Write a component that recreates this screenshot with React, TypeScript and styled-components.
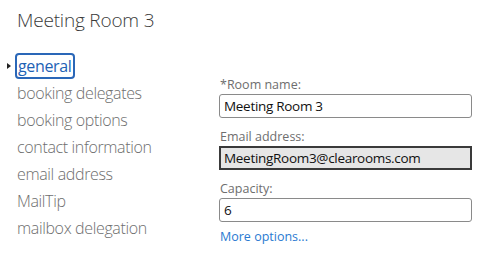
import React from "react";
import styled, { createGlobalStyle } from "styled-components";

const Global = createGlobalStyle`
  html, body { margin: 0; padding: 0; background: #fff; }
  body { font-family: "Open Sans", "Noto Sans", sans-serif; }
`;

const Page = styled.div`
  width: 500px;
  height: 267px;
  overflow: hidden;
  padding: 6px 0 0 17px;
  box-sizing: border-box;
`;

const Title = styled.h1`
  margin: 0;
  font-size: 19px;
  font-weight: 300;
  color: #3a3a3a;
  line-height: 28px;
  letter-spacing: -0.2px;
`;

const Body = styled.div`
  display: flex;
  margin-top: 18px;
`;

const Nav = styled.ul`
  list-style: none;
  margin: 0;
  padding: 0;
  width: 202px;
  display: flex;
  flex-direction: column;
`;

const NavItem = styled.li<{ $active?: boolean }>`
  position: relative;
  height: 27px;
  display: flex;
  align-items: center;
  font-size: 16px;
  font-weight: ${(p) => (p.$active ? 400 : 300)};
  color: ${(p) => (p.$active ? "#1e62b5" : "#6e6e6e")};
  letter-spacing: -0.35px;
`;

const Selected = styled.span`
  margin-left: -2px;
  padding: 0 1px;
  border: 2px solid #2a67b8;
  border-radius: 4px;
  line-height: 22px;
`;

const Arrow = styled.span`
  position: absolute;
  left: -10px;
  top: 11px;
  width: 0;
  height: 0;
  border-top: 3px solid transparent;
  border-bottom: 3px solid transparent;
  border-left: 4px solid #222;
`;

const Form = styled.div`
  display: flex;
  flex-direction: column;
  padding-top: 24px;
  width: 253px;
`;

const Label = styled.div`
  font-size: 12.5px;
  color: #6e6e6e;
  line-height: 18px;
  height: 18px;
  margin-left: 1px;
`;

const Input = styled.div<{ $readonly?: boolean }>`
  box-sizing: border-box;
  height: 24px;
  margin-bottom: 10px;
  border-style: solid;
  border-color: ${(p) => (p.$readonly ? "#3a3a3a" : "#8a8a8a")};
  border-width: ${(p) => (p.$readonly ? "2px" : "1px")};
  border-radius: ${(p) => (p.$readonly ? "0" : "3px")};
  background: ${(p) => (p.$readonly ? "#e6e6e6" : "#fff")};
  font-size: 13.5px;
  color: #111;
  display: flex;
  align-items: center;
  padding-left: ${(p) => (p.$readonly ? "3px" : "4px")};
  letter-spacing: -0.3px;
`;

const Link = styled.a`
  font-size: 12.5px;
  color: #2a7ad1;
  text-decoration: none;
  margin-top: -4px;
  margin-left: 1px;
  line-height: 18px;
`;

const items = [
  "booking delegates",
  "booking options",
  "contact information",
  "email address",
  "MailTip",
  "mailbox delegation",
];

export default function App() {
  return (
    <>
      <Global />
      <Page>
        <Title>Meeting Room 3</Title>
        <Body>
          <Nav>
            <NavItem $active>
              <Arrow />
              <Selected>general</Selected>
            </NavItem>
            {items.map((t) => (
              <NavItem key={t}>{t}</NavItem>
            ))}
          </Nav>
          <Form>
            <Label>*Room name:</Label>
            <Input>Meeting Room 3</Input>
            <Label>Email address:</Label>
            <Input $readonly>MeetingRoom3@clearooms.com</Input>
            <Label>Capacity:</Label>
            <Input>6</Input>
            <Link href="#">More options...</Link>
          </Form>
        </Body>
      </Page>
    </>
  );
}
